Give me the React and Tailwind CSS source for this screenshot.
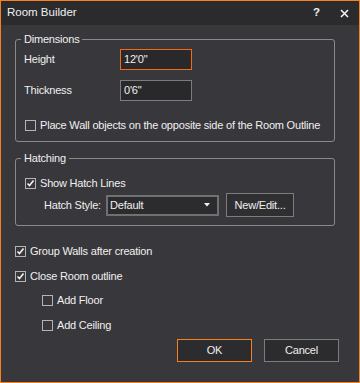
import React from 'react'

const font = { fontFamily: '"Liberation Sans", Arial, sans-serif' }

function Check({ checked, label, className = '' }) {
  return (
    <div className={`flex h-[16px] items-center gap-[4px] whitespace-nowrap ${className}`}>
      <span className="flex h-[11px] w-[11px] shrink-0 items-center justify-center border border-[#b4b4b4] bg-[#38373c]">
        {checked ? (
          <svg width="9" height="9" viewBox="0 0 9 9">
            <path d="M1.5 4.5 L3.5 6.5 L7.5 1.5" fill="none" stroke="#f2f2f2" strokeWidth="1.6" />
          </svg>
        ) : null}
      </span>
      <span>{label}</span>
    </div>
  )
}

function Group({ title, className = '', children }) {
  return (
    <div className={`relative rounded-[3px] border border-[#8a8a8a] ${className}`}>
      <span className="absolute -top-[9px] left-[5px] bg-[#38373c] px-[3px] leading-[16px]">{title}</span>
      {children}
    </div>
  )
}

export default function App() {
  return (
    <div
      style={font}
      className="flex h-[383px] w-[360px] flex-col border border-[#f58220] bg-[#38373c] text-[11px] tracking-[-0.2px] text-[#f0f0f0]"
    >
      <div className="flex h-[24px] shrink-0 items-center bg-[#2b2b2e] pl-[6px] pr-[10px] text-[11.5px] tracking-normal">
        <span className="flex-1">Room Builder</span>
        <span className="mr-[20px] font-bold">?</span>
        <svg width="9" height="9" viewBox="0 0 9 9">
          <path d="M1 1 L8 8 M8 1 L1 8" stroke="#f2f2f2" strokeWidth="1.6" />
        </svg>
      </div>

      <div className="flex flex-1 flex-col px-[14px] pt-[14px]">
        <Group title="Dimensions" className="w-[320px] pb-[8px] pl-[8px] pt-[9px]">
          <div className="flex h-[21px] items-center">
            <span className="w-[96px]">Height</span>
            <div className="flex h-[21px] w-[72px] items-center border border-[#f26a12] bg-[#29292c] px-[3px]">12'0"</div>
          </div>
          <div className="mt-[10px] flex h-[21px] items-center">
            <span className="w-[96px]">Thickness</span>
            <div className="flex h-[21px] w-[72px] items-center border border-[#7c7c7c] bg-[#29292c] px-[3px]">0'6"</div>
          </div>
          <Check className="mt-[16px] pl-[1px]" label="Place Wall objects on the opposite side of the Room Outline" />
        </Group>

        <Group title="Hatching" className="mt-[16px] w-[320px] pb-[8px] pl-[9px] pt-[16px]">
          <Check checked label="Show Hatch Lines" />
          <div className="mt-[2px] flex h-[24px] items-center whitespace-nowrap">
            <span className="ml-[19px] w-[62px]">Hatch Style:</span>
            <div className="flex h-[21px] w-[113px] items-center border-2 border-[#707070] bg-[#2c2c2f] pl-[2px] pr-[7px]">
              <span className="flex-1">Default</span>
              <svg width="6" height="4" viewBox="0 0 6 4">
                <path d="M0 0 H6 L3 3.5 Z" fill="#f2f2f2" />
              </svg>
            </div>
            <div className="ml-[7px] flex h-[24px] w-[68px] items-center justify-center border border-[#7c7c7c] bg-[#2f2f32]">
              New/Edit...
            </div>
          </div>
        </Group>

        <Check checked className="mt-[17px]" label="Group Walls after creation" />
        <Check checked className="mt-[9px]" label="Close Room outline" />
        <Check className="ml-[27px] mt-[8px]" label="Add Floor" />
        <Check className="ml-[27px] mt-[9px]" label="Add Ceiling" />

        <div className="mt-[6px] flex justify-end gap-[12px] pr-[6px]">
          <div className="flex h-[23px] w-[75px] items-center justify-center border border-[#f58220] bg-[#2c2c2f]">OK</div>
          <div className="flex h-[23px] w-[75px] items-center justify-center border border-[#7c7c7c] bg-[#2c2c2f]">Cancel</div>
        </div>
      </div>
    </div>
  )
}
